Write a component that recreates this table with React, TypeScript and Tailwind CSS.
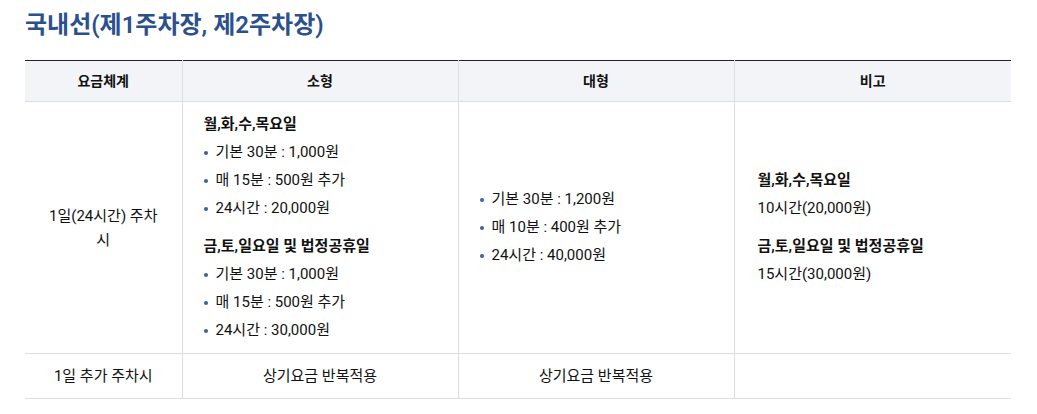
import React from "react";

const font = { fontFamily: 'Roboto, "Noto Sans CJK KR", sans-serif' };

function Bullets({ items }: { items: string[] }) {
  return (
    <ul className="flex flex-col">
      {items.map((t) => (
        <li key={t} className="flex items-center h-[28px]">
          <span className="w-[4px] h-[4px] rounded-full bg-[#3d5f9c] mr-[8px] shrink-0" />
          <span>{t}</span>
        </li>
      ))}
    </ul>
  );
}

export default function App() {
  return (
    <div className="bg-white w-[1037px] h-[414px] pl-[25px] pr-[26px] pt-[9px] text-[#111]" style={font}>
      <h2 className="text-[24px] leading-[32px] font-semibold text-[#2b508e]">
        국내선(제1주차장, 제2주차장)
      </h2>
      <table className="mt-[19px] w-[986px] border-collapse table-fixed text-[15px]">
        <colgroup>
          <col className="w-[157px]" />
          <col className="w-[276px]" />
          <col className="w-[276px]" />
          <col className="w-[277px]" />
        </colgroup>
        <thead>
          <tr className="bg-[#f3f4f8] border-t border-t-[#222] border-b border-b-[#dcdde3] h-[41px]">
            <th className="text-[14px] font-bold text-center border-r border-[#dcdde3]">요금체계</th>
            <th className="text-[14px] font-bold text-center border-r border-[#dcdde3]">소형</th>
            <th className="text-[14px] font-bold text-center border-r border-[#dcdde3]">대형</th>
            <th className="text-[14px] font-bold text-center">비고</th>
          </tr>
        </thead>
        <tbody>
          <tr className="border-b border-[#dcdde3] h-[252px]">
            <td className="text-center align-middle border-r border-[#dcdde3] leading-[24px]">
              1일(24시간) 주차
              <br />시
            </td>
            <td className="align-middle border-r border-[#dcdde3] pl-[21px]">
              <div className="h-[28px] flex items-center font-semibold">월,화,수,목요일</div>
              <Bullets items={["기본 30분 : 1,000원", "매 15분 : 500원 추가", "24시간 : 20,000원"]} />
              <div className="h-[28px] mt-[10px] flex items-center font-semibold">금,토,일요일 및 법정공휴일</div>
              <Bullets items={["기본 30분 : 1,000원", "매 15분 : 500원 추가", "24시간 : 30,000원"]} />
            </td>
            <td className="align-middle border-r border-[#dcdde3] pl-[21px]">
              <Bullets items={["기본 30분 : 1,200원", "매 10분 : 400원 추가", "24시간 : 40,000원"]} />
            </td>
            <td className="align-middle pl-[23px]">
              <div className="h-[28px] flex items-center font-semibold">월,화,수,목요일</div>
              <div className="h-[28px] flex items-center">10시간(20,000원)</div>
              <div className="h-[28px] mt-[10px] flex items-center font-semibold">금,토,일요일 및 법정공휴일</div>
              <div className="h-[28px] flex items-center">15시간(30,000원)</div>
            </td>
          </tr>
          <tr className="border-b border-[#dcdde3] h-[45px]">
            <td className="text-center border-r border-[#dcdde3]">1일 추가 주차시</td>
            <td className="text-center border-r border-[#dcdde3]">상기요금 반복적용</td>
            <td className="text-center border-r border-[#dcdde3]">상기요금 반복적용</td>
            <td></td>
          </tr>
        </tbody>
      </table>
    </div>
  );
}
